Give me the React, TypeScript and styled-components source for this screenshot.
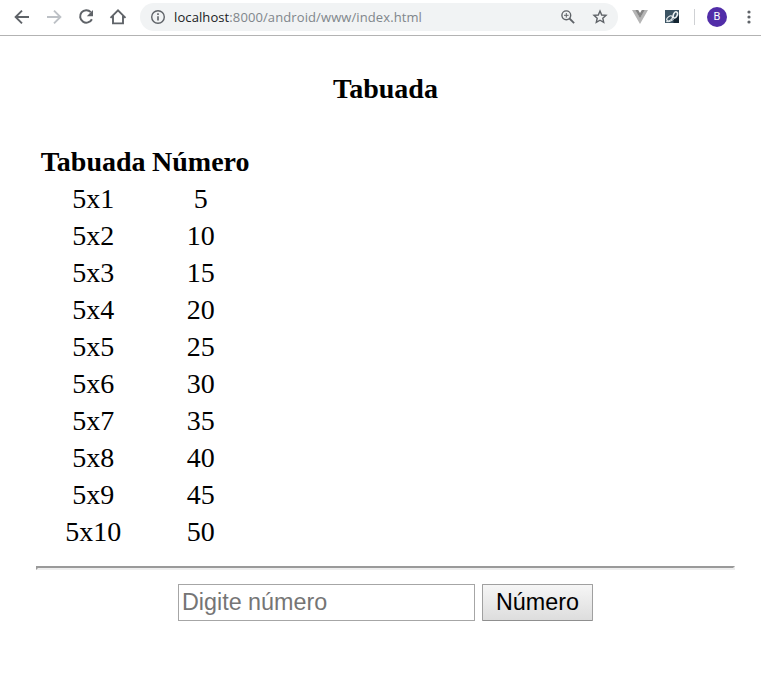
import React from "react";
import styled, { createGlobalStyle } from "styled-components";

const GlobalStyle = createGlobalStyle`
  * { box-sizing: border-box; }
  body { margin: 0; background: #fff; color: #000; }
`;

const Window = styled.div`
  display: flex;
  flex-direction: column;
  height: 100vh;
  overflow: hidden;
`;

const Toolbar = styled.header`
  display: flex;
  align-items: center;
  height: 36px;
  padding: 0 0 2px 12px;
  border-bottom: 1px solid #b3b3b3;
  background: #fff;
`;

const NavButtons = styled.nav`
  display: flex;
  align-items: center;
  gap: 12px;
`;

const Icon = styled.svg<{ $size?: number }>`
  display: block;
  flex: none;
  width: ${(p) => p.$size ?? 20}px;
  height: ${(p) => p.$size ?? 20}px;
`;

const AddressBar = styled.div`
  display: flex;
  align-items: center;
  flex: none;
  width: 478px;
  height: 28px;
  margin-left: 12px;
  padding: 0 9px;
  border-radius: 14px;
  background: #f1f3f4;
`;

const Url = styled.span`
  flex: 1;
  margin-left: 7px;
  font: 13px/20px "Open Sans", "Noto Sans", sans-serif;
  letter-spacing: 0.1px;
  color: #80868b;
  white-space: nowrap;
`;

const Host = styled.span`
  color: #202124;
`;

const AddressActions = styled.div`
  display: flex;
  gap: 14px;
`;

const Extensions = styled.div`
  display: flex;
  align-items: center;
  gap: 16px;
  margin-left: 14px;
`;

const Divider = styled.div`
  width: 1px;
  height: 16px;
  margin-left: 14px;
  background: #cfd1d4;
`;

const Avatar = styled.div`
  width: 20px;
  height: 20px;
  margin-left: 12px;
  border-radius: 50%;
  background: #512da8;
  color: #fff;
  font: 11px/20px Roboto, sans-serif;
  text-align: center;
`;

const MenuIcon = styled(Icon)`
  margin-left: 12px;
`;

const Page = styled.main`
  display: flex;
  flex-direction: column;
  width: 699px;
  margin-left: 36px;
  font: 28px/33px "Liberation Serif", "Times New Roman", serif;
`;

const Title = styled.h4`
  margin: 36px 0;
  font-size: 28px;
  line-height: 33px;
  text-align: center;
`;

const Table = styled.table`
  align-self: flex-start;
  border-collapse: separate;
  border-spacing: 3.5px 4px;
`;

const Row = styled.tr`
  height: 33px;
`;

const HeadCell = styled.th`
  padding: 0 1.75px;
  line-height: 33px;
`;

const Cell = styled.td`
  padding: 0 1.75px;
  line-height: 33px;
  text-align: center;
`;

const Rule = styled.hr`
  width: 100%;
  height: 4px;
  margin: 14px 0;
  border: 2px solid;
  border-color: #9a9a9a #eee #eee #9a9a9a;
`;

const Form = styled.form`
  display: flex;
  justify-content: center;
  gap: 7px;
`;

const NumberInput = styled.input`
  width: 297px;
  height: 37px;
  padding: 0 3px;
  border: 1px solid #a6a6a6;
  border-radius: 0;
  outline: none;
  background: #fff;
  font: 23.333px "Liberation Sans", Arial, sans-serif;
  &::placeholder { color: #757575; opacity: 1; }
`;

const Submit = styled.button`
  width: 111px;
  height: 37px;
  padding: 0;
  border: 1px solid #a0a0a0;
  border-bottom-color: #8f8f8f;
  border-radius: 1px;
  background: linear-gradient(#f6f6f6, #dddddd);
  color: #000;
  font: 23.333px "Liberation Sans", Arial, sans-serif;
`;

const multiples = Array.from({ length: 10 }, (_, i) => i + 1);

export default function App() {
  return (
    <Window>
      <GlobalStyle />
      <Toolbar>
        <NavButtons>
          <Icon viewBox="0 0 20 20" fill="none" stroke="#5f6368" strokeWidth="1.9">
            <path d="M17 10H4M10 3.6 3.6 10l6.4 6.4" />
          </Icon>
          <Icon viewBox="0 0 20 20" fill="none" stroke="#bdc1c6" strokeWidth="1.9">
            <path d="M3 10h13M10 3.6l6.4 6.4-6.4 6.4" />
          </Icon>
          <Icon viewBox="0 0 20 20">
            <path d="M14.8 5.1a6.2 6.2 0 1 0 1.1 7.1" fill="none" stroke="#5f6368" strokeWidth="2" />
            <path d="M17 3v6.2h-6.2z" fill="#5f6368" />
          </Icon>
          <Icon viewBox="0 0 20 20" fill="none" stroke="#5f6368" strokeWidth="1.9">
            <path d="M2.5 10.8 10 3.3l7.5 7.5M5 9v7.4h10V9" />
          </Icon>
        </NavButtons>
        <AddressBar>
          <Icon $size={18} viewBox="0 0 18 18">
            <circle cx="9" cy="9" r="6.3" fill="none" stroke="#5f6368" strokeWidth="1.4" />
            <path d="M8.2 8.2h1.6v4.3H8.2zM8.2 5.3h1.6v1.6H8.2z" fill="#5f6368" />
          </Icon>
          <Url>
            <Host>localhost</Host>:8000/android/www/index.html
          </Url>
          <AddressActions>
            <Icon $size={18} viewBox="0 0 18 18" fill="none" stroke="#5f6368">
              <circle cx="7.3" cy="7.3" r="4.4" strokeWidth="1.4" />
              <path d="m10.5 10.5 4.6 4.6" strokeWidth="1.8" />
              <path d="M5 7.3h4.6M7.3 5v4.6" strokeWidth="1" />
            </Icon>
            <Icon $size={18} viewBox="0 0 18 18" fill="none" stroke="#5f6368" strokeWidth="1.4">
              <path d="m9 3 1.7 4 4.3.4-3.2 2.8.9 4.2L9 12.2l-3.7 2.2.9-4.2L3 7.4 7.3 7z" />
            </Icon>
          </AddressActions>
        </AddressBar>
        <Extensions>
          <Icon $size={16} viewBox="0 0 16 16">
            <path d="M0 1h3.4L8 9l4.6-8H16L8 15z" fill="#b5b5b5" />
            <path d="M3.2 1h3L8 4.1 9.8 1h3L8 9.3z" fill="#858585" />
          </Icon>
          <Icon $size={16} viewBox="0 0 16 16">
            <path d="M1 1h14v13H1z" fill="#3b5363" />
            <path d="M9.5 10 15 6.5V14H9.5z" fill="#142532" />
            <g fill="none" stroke="#edf2f4">
              <ellipse cx="5.6" cy="9.4" rx="3.3" ry="1.9" transform="rotate(-38 5.6 9.4)" strokeWidth="1.1" />
              <path d="M2.2 12.6c3.4.4 5.4-.6 7.6-2.6" strokeWidth="1" />
              <ellipse cx="11.3" cy="5.9" rx="1.9" ry="3.2" transform="rotate(24 11.3 5.9)" strokeWidth="1.5" />
            </g>
          </Icon>
        </Extensions>
        <Divider />
        <Avatar>B</Avatar>
        <MenuIcon viewBox="0 0 20 20" fill="#5f6368">
          <circle cx="10" cy="5" r="1.6" />
          <circle cx="10" cy="10" r="1.6" />
          <circle cx="10" cy="15" r="1.6" />
        </MenuIcon>
      </Toolbar>
      <Page>
        <Title>Tabuada</Title>
        <Table>
          <thead>
            <Row>
              <HeadCell>Tabuada</HeadCell>
              <HeadCell>Número</HeadCell>
            </Row>
          </thead>
          <tbody>
            {multiples.map((n) => (
              <Row key={n}>
                <Cell>5x{n}</Cell>
                <Cell>{5 * n}</Cell>
              </Row>
            ))}
          </tbody>
        </Table>
        <Rule />
        <Form onSubmit={(e) => e.preventDefault()}>
          <NumberInput placeholder="Digite número" />
          <Submit>Número</Submit>
        </Form>
      </Page>
    </Window>
  );
}
